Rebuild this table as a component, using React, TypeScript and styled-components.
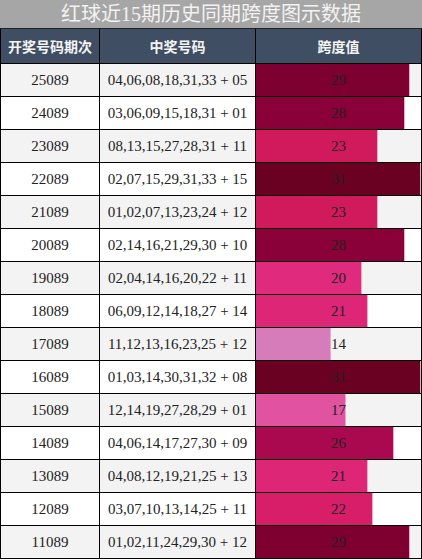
import styled, { createGlobalStyle } from 'styled-components'

interface Draw {
  period: string
  numbers: string
  span: number
}

const MAX_SPAN = 31

const draws: Draw[] = [
  { period: '25089', numbers: '04,06,08,18,31,33 + 05', span: 29 },
  { period: '24089', numbers: '03,06,09,15,18,31 + 01', span: 28 },
  { period: '23089', numbers: '08,13,15,27,28,31 + 11', span: 23 },
  { period: '22089', numbers: '02,07,15,29,31,33 + 15', span: 31 },
  { period: '21089', numbers: '01,02,07,13,23,24 + 12', span: 23 },
  { period: '20089', numbers: '02,14,16,21,29,30 + 10', span: 28 },
  { period: '19089', numbers: '02,04,14,16,20,22 + 11', span: 20 },
  { period: '18089', numbers: '06,09,12,14,18,27 + 14', span: 21 },
  { period: '17089', numbers: '11,12,13,16,23,25 + 12', span: 14 },
  { period: '16089', numbers: '01,03,14,30,31,32 + 08', span: 31 },
  { period: '15089', numbers: '12,14,19,27,28,29 + 01', span: 17 },
  { period: '14089', numbers: '04,06,14,17,27,30 + 09', span: 26 },
  { period: '13089', numbers: '04,08,12,19,21,25 + 13', span: 21 },
  { period: '12089', numbers: '03,07,10,13,14,25 + 11', span: 22 },
  { period: '11089', numbers: '01,02,11,24,29,30 + 12', span: 29 }
]

const spanColors: Record<number, string> = {
  31: '#6a0022',
  29: '#7d0030',
  28: '#8a0038',
  26: '#ab094f',
  23: '#d11a5b',
  22: '#d81e69',
  21: '#de2676',
  20: '#e02a7e',
  17: '#e153a0',
  14: '#d77cba'
}

const GlobalStyle = createGlobalStyle`
  html, body {
    margin: 0;
    padding: 0;
    background: #fff;
  }
`

const Page = styled.div`
  width: 422px;
  height: 560px;
  overflow: hidden;
  font-family: 'Liberation Serif', 'Noto Sans CJK SC', serif;
`

const Title = styled.h1`
  margin: 0;
  height: 28px;
  line-height: 28px;
  background: #a6a6a6;
  color: #f2f2f2;
  font-size: 20px;
  font-weight: normal;
  text-align: center;
  border-bottom: 1px solid #222;
`

const Grid = styled.div`
  display: grid;
  grid-template-columns: 98px 155px 165px;
  gap: 1px;
  padding: 0 1px 1px;
  background: #000;
`

const HeadCell = styled.div`
  height: 34px;
  display: flex;
  align-items: center;
  justify-content: center;
  background: #3f4e62;
  color: #f4f4f4;
  font-family: 'Noto Sans CJK SC', sans-serif;
  font-weight: bold;
  font-size: 14px;
`

const Cell = styled.div<{ $odd: boolean }>`
  height: 32px;
  display: flex;
  align-items: center;
  justify-content: center;
  background: ${(p) => (p.$odd ? '#f3f3f3' : '#fff')};
  color: #222;
  font-size: 15px;
`

const BarCell = styled(Cell)`
  position: relative;
`

const Bar = styled.div<{ $color: string }>`
  position: absolute;
  left: 0;
  top: 0;
  bottom: 0;
  background: ${(p) => p.$color};
  border-right: 1px solid #f2a6c8;
`

const BarValue = styled.span`
  position: relative;
`

export default function App() {
  return (
    <Page>
      <GlobalStyle />
      <Title>红球近15期历史同期跨度图示数据</Title>
      <Grid>
        <HeadCell>开奖号码期次</HeadCell>
        <HeadCell>中奖号码</HeadCell>
        <HeadCell>跨度值</HeadCell>
        {draws.map((d, i) => {
          const odd = i % 2 === 0
          const width = Math.round((165 * d.span) / MAX_SPAN)
          return [
            <Cell key={d.period + 'p'} $odd={odd}>{d.period}</Cell>,
            <Cell key={d.period + 'n'} $odd={odd}>{d.numbers}</Cell>,
            <BarCell key={d.period + 's'} $odd={odd}>
              <Bar $color={spanColors[d.span]} style={{ width: width - 1 }} />
              <BarValue>{d.span}</BarValue>
            </BarCell>
          ]
        })}
      </Grid>
    </Page>
  )
}
